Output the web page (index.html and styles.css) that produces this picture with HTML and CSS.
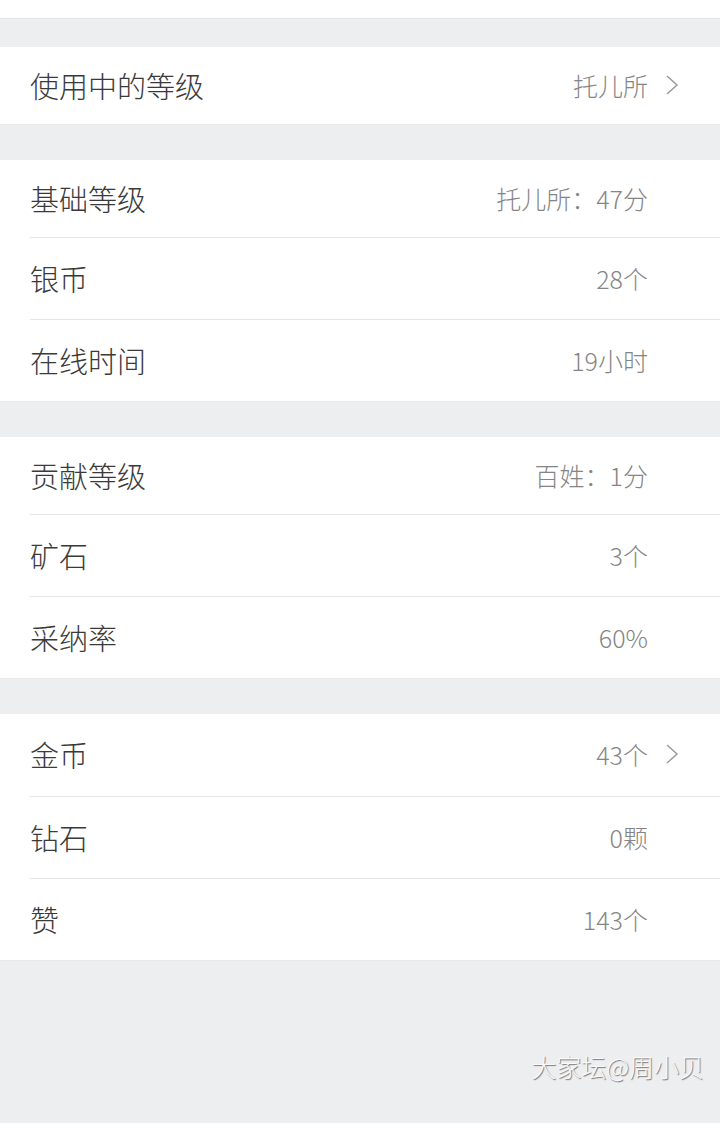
FILE: index.html
```html
<!DOCTYPE html>
<html lang="zh-CN">

<head>
    <meta charset="UTF-8">
    <meta name="viewport" content="width=device-width, initial-scale=1.0">
    <title>我的等级</title>
    <link rel="stylesheet" href="styles.css">
</head>

<body>
    <div class="top-bar"></div>

    <div class="group group-first">
        <div class="row">
            <span class="label">使用中的等级</span>
            <span class="value">托儿所</span>
            <span class="arrow"><svg width="14" height="22" viewBox="0 0 14 22"><path d="M2 2 L12 11 L2 20" fill="none" stroke="#9a9a9a" stroke-width="1.5"/></svg></span>
        </div>
    </div>

    <div class="group">
        <div class="row">
            <span class="label">基础等级</span>
            <span class="value">托儿所：47分</span>
            <span class="arrow"></span>
        </div>
        <div class="row">
            <span class="label">银币</span>
            <span class="value">28个</span>
            <span class="arrow"></span>
        </div>
        <div class="row">
            <span class="label">在线时间</span>
            <span class="value">19小时</span>
            <span class="arrow"></span>
        </div>
    </div>

    <div class="group">
        <div class="row">
            <span class="label">贡献等级</span>
            <span class="value">百姓：1分</span>
            <span class="arrow"></span>
        </div>
        <div class="row">
            <span class="label">矿石</span>
            <span class="value">3个</span>
            <span class="arrow"></span>
        </div>
        <div class="row">
            <span class="label">采纳率</span>
            <span class="value">60%</span>
            <span class="arrow"></span>
        </div>
    </div>

    <div class="group group-tall">
        <div class="row">
            <span class="label">金币</span>
            <span class="value">43个</span>
            <span class="arrow"><svg width="14" height="22" viewBox="0 0 14 22"><path d="M2 2 L12 11 L2 20" fill="none" stroke="#9a9a9a" stroke-width="1.5"/></svg></span>
        </div>
        <div class="row">
            <span class="label">钻石</span>
            <span class="value">0颗</span>
            <span class="arrow"></span>
        </div>
        <div class="row">
            <span class="label">赞</span>
            <span class="value">143个</span>
            <span class="arrow"></span>
        </div>
    </div>

    <div class="watermark">大家坛@周小贝</div>
</body>

</html>
```

FILE: styles.css
```css
body {
    font-family: "Noto Sans CJK SC", "Noto Sans", sans-serif;
    background-color: #edeef0;
    margin: 0;
    padding: 0;
    min-height: 1123px;
    position: relative;
}

.top-bar {
    height: 18px;
    background-color: #fff;
    border-bottom: 1px solid #e4e5e7;
}

.group {
    background-color: #fff;
    margin-top: 35px;
    padding-left: 30px;
    border-bottom: 1px solid #e8e9eb;
}

.group-first {
    margin-top: 28px;
}

.row {
    display: flex;
    align-items: center;
    height: 82px;
    padding-bottom: 1px;
    box-sizing: border-box;
    border-top: 1px solid #e6e6e6;
}

.row:first-child {
    border-top: none;
    height: 77px;
}

.group-tall .row:first-child {
    height: 82px;
    padding-bottom: 2px;
}

.label {
    flex: 1;
    font-size: 29px;
    font-weight: 300;
    color: #3a3a3a;
}

.value {
    font-size: 25px;
    font-weight: 300;
    color: #858585;
}

.arrow {
    width: 72px;
    box-sizing: border-box;
    display: flex;
    padding-left: 17px;
}

.watermark {
    position: absolute;
    right: 16px;
    top: 1048px;
    font-size: 25px;
    font-weight: 300;
    color: #fafafa;
    text-shadow: 1px 1px 1px rgba(0, 0, 0, 0.5);
}
```
